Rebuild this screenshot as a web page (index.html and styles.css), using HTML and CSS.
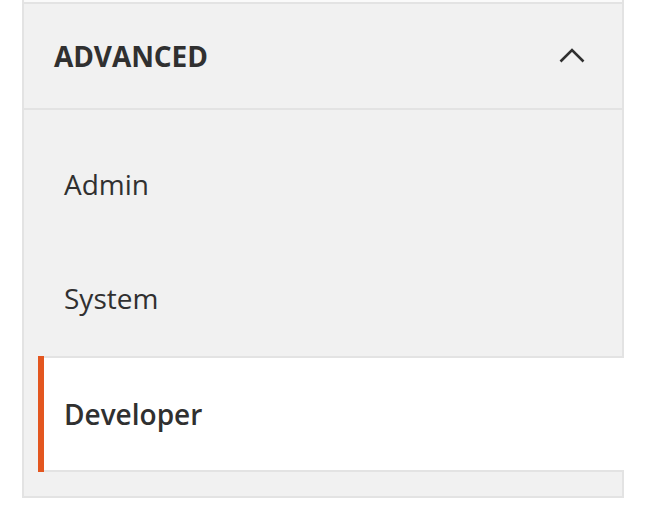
FILE: index.html
```html
<!DOCTYPE html>
<html>
<head>
<meta charset="utf-8">
<link rel="stylesheet" href="styles.css">
</head>
<body>
<nav class="nav">
  <div class="nav-lead"></div>
  <div class="nav-title">
    <span class="nav-title-text">ADVANCED</span>
    <svg class="chevron" width="28" height="18" viewBox="0 0 28 18">
      <path d="M2.5 15.5 L14 4 L25.5 15.5" fill="none" stroke="#303030" stroke-width="2.6"/>
    </svg>
  </div>
  <ul class="nav-items">
    <li class="nav-item"><a class="nav-link">Admin</a></li>
    <li class="nav-item"><a class="nav-link">System</a></li>
    <li class="nav-item is-active"><a class="nav-link">Developer</a></li>
  </ul>
</nav>
</body>
</html>
```
FILE: styles.css
```css
html, body {
  margin: 0;
  padding: 0;
  background: #ffffff;
}
body {
  font-family: "Open Sans", "Liberation Sans", sans-serif;
  color: #303030;
}
.nav {
  margin-left: 22px;
  width: 598px;
  border-left: 2px solid #e3e3e3;
  border-right: 2px solid #e3e3e3;
  border-bottom: 2px solid #e3e3e3;
  background: #f1f1f1;
}
.nav-lead {
  height: 2px;
  background: #fafafa;
  border-bottom: 2px solid #e3e3e3;
}
.nav-title {
  height: 104px;
  border-bottom: 2px solid #e3e3e3;
  display: flex;
  align-items: center;
  justify-content: space-between;
  padding: 0 36px 0 30px;
}
.nav-title-text {
  font-size: 28px;
  font-weight: 700;
  line-height: 1;
  letter-spacing: -0.1px;
}
.chevron {
  display: block;
  margin-top: -2px;
}
.nav-items {
  list-style: none;
  margin: 0;
  padding: 18px 0 24px 14px;
}
.nav-item {
  position: relative;
  height: 114px;
  display: flex;
  align-items: center;
  padding-left: 6px;
}
.nav-link {
  padding-left: 20px;
  font-size: 28px;
  line-height: 1;
  margin-top: -2px;
}
.nav-item.is-active {
  height: 112px;
  background: #ffffff;
  border-top: 2px solid #e3e3e3;
  border-bottom: 2px solid #e3e3e3;
  margin-right: -2px;
}
.nav-item.is-active::before {
  content: "";
  position: absolute;
  left: 0;
  top: -2px;
  bottom: -2px;
  width: 6px;
  background: #e3561f;
}
.is-active .nav-link {
  font-weight: 600;
  margin-top: 0;
}
```
